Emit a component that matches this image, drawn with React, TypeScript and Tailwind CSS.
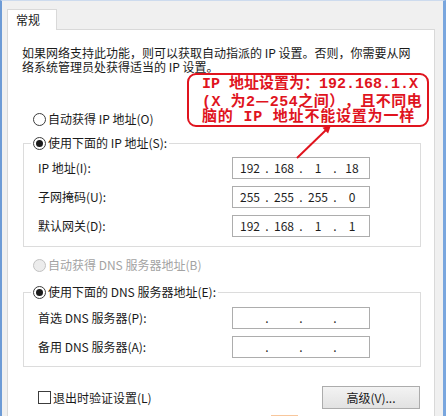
import React from "react";

const uiFont = { fontFamily: '"Noto Sans CJK SC", "Noto Sans", sans-serif' };
const noteFont = { fontFamily: '"Liberation Mono", "Noto Sans CJK SC", monospace' };

function Radio({ checked = false, disabled = false }: { checked?: boolean; disabled?: boolean }) {
  return (
    <span
      className={
        disabled
          ? "flex h-[13px] w-[13px] shrink-0 items-center justify-center rounded-full border border-[#c2c2c2] bg-[#ececec]"
          : "flex h-[13px] w-[13px] shrink-0 items-center justify-center rounded-full border border-[#3c3c3c] bg-white"
      }
    >
      {checked && <span className="h-[7px] w-[7px] rounded-full bg-[#1b1b1b]" />}
    </span>
  );
}

function IpBox({ parts }: { parts: string[] }) {
  return (
    <div className="flex h-[22px] w-[138px] items-center border border-[#adadad] bg-white pl-[1px] text-[12px] text-[#1e1e1e]">
      {parts.map((p, i) => (
        <React.Fragment key={i}>
          <span className="w-[32px] text-center leading-[20px]">{p}</span>
          {i < 3 && <span className="flex w-[2px] justify-center leading-[20px]">.</span>}
        </React.Fragment>
      ))}
    </div>
  );
}

function FieldRow({ label, parts }: { label: string; parts: string[] }) {
  return (
    <div className="flex h-[22px] items-center">
      <div className="w-[208px] pl-[14px]">{label}</div>
      <IpBox parts={parts} />
    </div>
  );
}

export default function App() {
  return (
    <div
      className="relative h-[416px] w-[446px] overflow-hidden border-t border-l-[2px] border-r-[3px] border-t-[#cddbee] border-l-[#6d9bd6] border-r-[#79a6de] bg-[#f0f0f0] pl-[5px] pt-[8px] text-[12px] text-[#1a1a1a] [text-spacing-trim:space-all]"
      style={uiFont}
    >
      {/* tab header */}
      <div className="relative z-10 -mb-px h-[21px] w-[50px] border border-b-0 border-[#d9d9d9] bg-white pl-[8px] leading-[20px]">
        常规
      </div>

      {/* tab page */}
      <div className="h-[400px] w-[428px] border border-[#d9d9d9] bg-white pl-[14px] pr-[13px] pt-[16px]">
        <p className="whitespace-nowrap leading-[14px]">
          如果网络支持此功能，则可以获取自动指派的 IP 设置。否则，你需要从网
          <br />
          络系统管理员处获得适当的 IP 设置。
        </p>

        <div className="ml-[11px] mt-[37px] flex h-[16px] items-center gap-[2px]">
          <Radio />
          <span>自动获得 IP 地址(O)</span>
        </div>

        <fieldset className="ml-[1px] mt-[8px] border border-[#dcdcdc] pb-[9px]">
          <legend className="ml-[7px] px-[2px]">
            <span className="flex h-[16px] items-center gap-[2px]">
              <Radio checked />
              <span>使用下面的 IP 地址(S):</span>
            </span>
          </legend>
          <div className="mt-[6px] flex flex-col gap-[7px]">
            <FieldRow label="IP 地址(I):" parts={["192", "168", "1", "18"]} />
            <FieldRow label="子网掩码(U):" parts={["255", "255", "255", "0"]} />
            <FieldRow label="默认网关(D):" parts={["192", "168", "1", "1"]} />
          </div>
        </fieldset>

        <div className="ml-[11px] mt-[10px] flex h-[16px] items-center gap-[2px] text-[#a3a3a3]">
          <Radio disabled />
          <span>自动获得 DNS 服务器地址(B)</span>
        </div>

        <fieldset className="ml-[1px] mt-[11px] border border-[#dcdcdc] pb-[8px]">
          <legend className="ml-[7px] px-[2px]">
            <span className="flex h-[16px] items-center gap-[2px]">
              <Radio checked />
              <span>使用下面的 DNS 服务器地址(E):</span>
            </span>
          </legend>
          <div className="mt-[7px] flex flex-col gap-[7px]">
            <FieldRow label="首选 DNS 服务器(P):" parts={["", "", "", ""]} />
            <FieldRow label="备用 DNS 服务器(A):" parts={["", "", "", ""]} />
          </div>
        </fieldset>

        <div className="mr-[1px] mt-[19px] flex h-[23px] items-center justify-between">
          <div className="ml-[16px] flex items-center gap-[2px]">
            <span className="h-[13px] w-[13px] border border-[#3c3c3c] bg-white" />
            <span>退出时验证设置(L)</span>
          </div>
          <button className="h-[23px] w-[98px] border border-[#acacac] bg-linear-to-b from-[#f3f3f3] to-[#e2e2e2] text-[12px] text-[#1a1a1a]">
            高级(V)...
          </button>
        </div>

        <div className="ml-[249px] mt-[6px] h-[2px] w-[27px] bg-[#f8c79c]" />
      </div>

      {/* red note */}
      <div
        className="absolute left-[185px] top-[72px] h-[54px] w-[242px] whitespace-nowrap rounded-[9px] border-2 border-[#e0141e] bg-white pl-[13px] pt-[2px] text-[15px] font-semibold leading-[15px] text-[#e0141e] [text-spacing-trim:space-all]"
        style={noteFont}
      >
        <div>IP 地址设置为：192.168.1.X</div>
        <div className="tracking-[0.5px]">
          (X 为2<span style={uiFont}>—</span>254之间），且不同电
        </div>
        <div className="tracking-[0.8px]">脑的 IP 地址不能设置为一样</div>
      </div>

      {/* pointer arrow */}
      <svg
        className="pointer-events-none absolute left-[288px] top-[119px]"
        width="50"
        height="45"
        viewBox="0 0 50 45"
      >
        <line x1="7" y1="38" x2="36" y2="10" stroke="#e0141e" strokeWidth="2" />
        <polygon points="41,5 38.1,13.5 32.5,7.7" fill="#e0141e" />
      </svg>
    </div>
  );
}
